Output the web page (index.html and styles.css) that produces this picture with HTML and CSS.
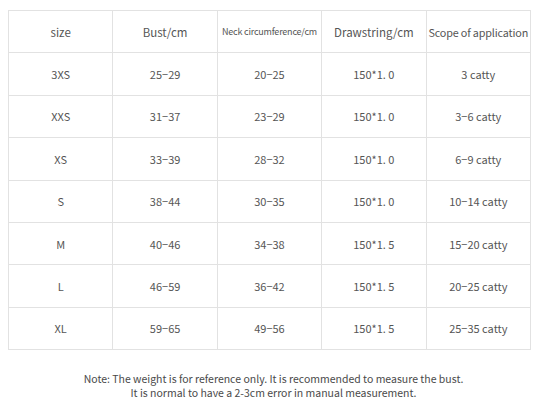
FILE: index.html
```html
<!DOCTYPE html>
<html>
<head>
<meta charset="utf-8">
<link rel="stylesheet" href="styles.css">
</head>
<body>
<div class="page">
  <table class="chart">
    <tr class="head">
      <td>size</td><td>Bust/cm</td><td class="small">Neck circumference/cm</td><td>Drawstring/cm</td><td class="scope">Scope of application</td>
    </tr>
    <tr><td>3XS</td><td>25−29</td><td>20−25</td><td>150*1. 0</td><td>3 catty</td></tr>
    <tr><td>XXS</td><td>31−37</td><td>23−29</td><td>150*1. 0</td><td>3−6 catty</td></tr>
    <tr><td>XS</td><td>33−39</td><td>28−32</td><td>150*1. 0</td><td>6−9 catty</td></tr>
    <tr><td>S</td><td>38−44</td><td>30−35</td><td>150*1. 0</td><td>10−14 catty</td></tr>
    <tr><td>M</td><td>40−46</td><td>34−38</td><td>150*1. 5</td><td>15−20 catty</td></tr>
    <tr><td>L</td><td>46−59</td><td>36−42</td><td>150*1. 5</td><td>20−25 catty</td></tr>
    <tr><td>XL</td><td>59−65</td><td>49−56</td><td>150*1. 5</td><td>25−35 catty</td></tr>
  </table>
  <p class="note">Note: The weight is for reference only. It is recommended to measure the bust.<br>It is normal to have a 2-3cm error in manual measurement.</p>
</div>
</body>
</html>
```
FILE: styles.css
```css
html, body { margin: 0; padding: 0; background: #fff; }
.page { width: 541px; height: 400px; padding-top: 10px; box-sizing: border-box; font-family: "Noto Sans CJK SC", "Noto Sans", sans-serif; color: #555; }
.chart { margin-left: 8px; width: 523px; border-collapse: collapse; table-layout: fixed; }
.chart td { border: 1px solid #e2e2e2; height: 41.4px; padding: 0; text-align: center; font-size: 11px; line-height: 14px; white-space: nowrap; }
.chart .head td { font-size: 11.5px; }
.chart .head td.small { font-size: 9px; letter-spacing: -0.2px; }
.chart .head td.scope { font-size: 10.8px; letter-spacing: -0.15px; }
.note { margin: 22px 0 0 0; text-align: center; font-size: 10.5px; line-height: 14px; color: #4a4a4a; padding-left: 6px; }
```
